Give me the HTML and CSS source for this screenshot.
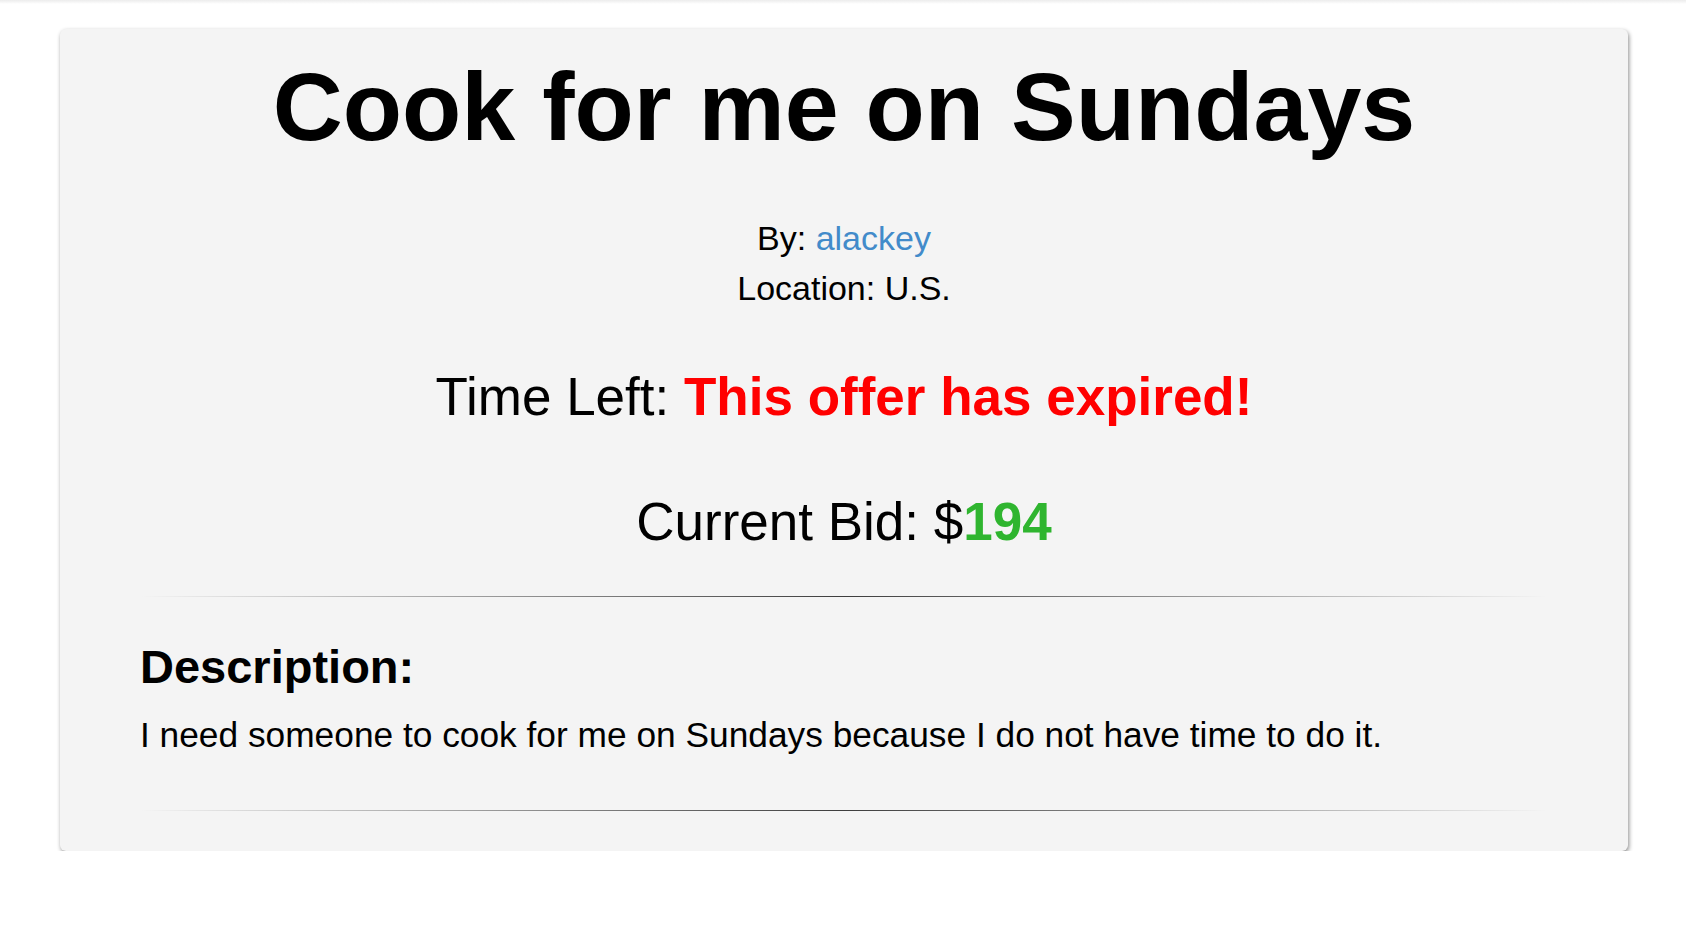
FILE: index.html
```html
<!DOCTYPE html>
<html>
<head>
<meta charset="utf-8">
<title>Cook for me on Sundays</title>
<link rel="stylesheet" href="styles.css">
</head>
<body>
<div class="topbar"></div>
<div class="card">
  <h1 class="title">Cook for me on Sundays</h1>
  <div class="meta">
    <div class="meta-line">By: <a class="user" href="#">alackey</a></div>
    <div class="meta-line">Location: U.S.</div>
  </div>
  <div class="time">Time Left: <span class="expired">This offer has expired!</span></div>
  <div class="bid">Current Bid: $<span class="amount">194</span></div>
  <hr class="rule">
  <h3 class="desc-title">Description:</h3>
  <p class="desc">I need someone to cook for me on Sundays because I do not have time to do it.</p>
  <hr class="rule">
</div>
</body>
</html>
```
FILE: styles.css
```css
html, body {
  margin: 0;
  padding: 0;
  background: #ffffff;
}
body {
  font-family: "Liberation Sans", Arial, Helvetica, sans-serif;
  color: #000;
}
.topbar {
  height: 4px;
  background: linear-gradient(to bottom, #ececec, #ffffff);
}
.card {
  margin: 25px 0 0 60px;
  width: 1568px;
  box-sizing: border-box;
  padding: 23px 80px 40px 80px;
  background: #f4f4f4;
  border-radius: 6px;
  box-shadow: 1px 2px 4px rgba(0,0,0,0.45);
}
.title {
  margin: 0;
  font-size: 97px;
  line-height: 110px;
  font-weight: bold;
  text-align: center;
}
.meta {
  margin-top: 51px;
  text-align: center;
}
.meta-line {
  font-size: 34px;
  line-height: 50px;
}
.user {
  color: #428bca;
  text-decoration: none;
}
.time {
  margin-top: 54px;
  font-size: 53px;
  line-height: 60px;
  text-align: center;
}
.expired {
  color: #ff0000;
  font-weight: bold;
}
.bid {
  margin-top: 65px;
  font-size: 53px;
  line-height: 60px;
  text-align: center;
}
.amount {
  color: #2fb52f;
  font-weight: bold;
}
.rule {
  margin: 44px 0 0 0;
  border: 0;
  height: 1px;
  background-image: linear-gradient(to right, rgba(0,0,0,0), rgba(0,0,0,0.75), rgba(0,0,0,0));
}
.desc-title {
  margin: 42px 0 0 0;
  font-size: 47px;
  line-height: 56px;
  font-weight: bold;
}
.desc {
  margin: 16px 0 51px 0;
  font-size: 35.3px;
  line-height: 48px;
}
.desc + .rule {
  margin-top: 0;
}
```
